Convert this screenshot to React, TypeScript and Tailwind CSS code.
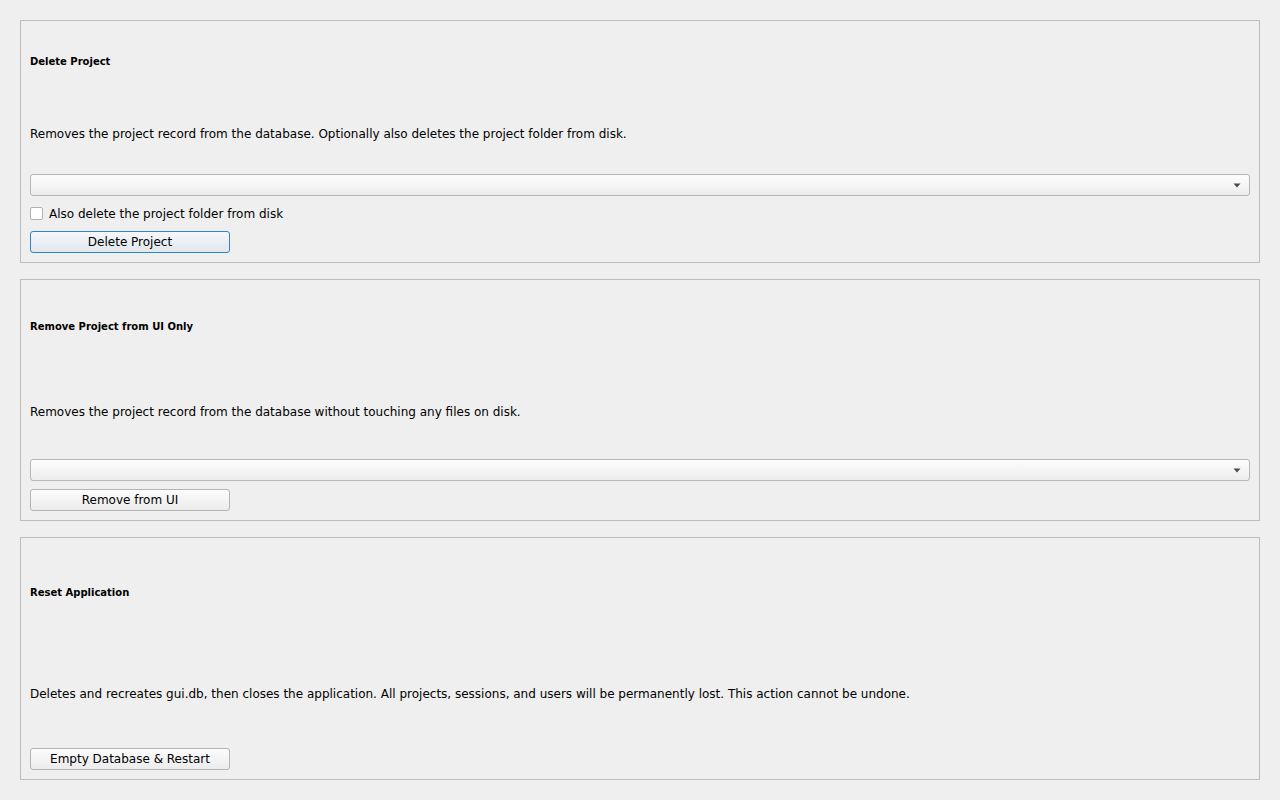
import React from "react";

const font = { fontFamily: '"DejaVu Sans", Verdana, sans-serif' };

function Combo({ className = "" }: { className?: string }) {
  return (
    <div
      className={`h-[22px] w-full rounded-[3px] border border-[#b6b6b6] bg-gradient-to-b from-[#fdfdfd] to-[#ededed] flex items-center justify-end pr-[8px] ${className}`}
    >
      <svg width="8" height="5" viewBox="0 0 8 5" className="block">
        <path d="M0.5 0.5 L7.5 0.5 L4 4.5 Z" fill="#4a4a4a" />
      </svg>
    </div>
  );
}

function Button({ label, focused = false, className = "" }: { label: string; focused?: boolean; className?: string }) {
  return (
    <div
      className={`h-[22px] w-[200px] rounded-[3px] border flex items-center justify-center text-[12px] leading-[14px] text-black ${
        focused
          ? "border-[#3284c3] bg-gradient-to-b from-[#f4f7fa] to-[#e1e7ee]"
          : "border-[#b4b4b4] bg-gradient-to-b from-[#fcfcfc] to-[#ececec]"
      } ${className}`}
    >
      {label}
    </div>
  );
}

export default function App() {
  return (
    <div className="w-[1280px] h-[800px] bg-[#efefef] px-[20px] py-[20px] flex flex-col gap-[16px] text-black" style={font}>
      {/* Delete Project */}
      <div className="h-[243px] border border-[#bcbcbc] pt-[35px] pb-[9px] px-[9px] flex flex-col">
        <div className="text-[10px] leading-[12px] font-bold">Delete Project</div>
        <div className="mt-[59px] text-[12px] leading-[14px]">
          Removes the project record from the database. Optionally also deletes the project folder from disk.
        </div>
        <Combo className="mt-[33px]" />
        <div className="mt-[11px] h-[13px] flex items-center gap-[6px]">
          <div className="w-[13px] h-[13px] rounded-[2px] border border-[#b0b0b0] bg-white" />
          <span className="text-[12px] leading-[14px]">Also delete the project folder from disk</span>
        </div>
        <Button label="Delete Project" focused className="mt-[11px]" />
      </div>

      {/* Remove Project from UI Only */}
      <div className="h-[242px] border border-[#bcbcbc] pt-[41px] pb-[9px] px-[9px] flex flex-col">
        <div className="text-[10px] leading-[12px] font-bold">Remove Project from UI Only</div>
        <div className="mt-[72px] text-[12px] leading-[14px]">
          Removes the project record from the database without touching any files on disk.
        </div>
        <Combo className="mt-[40px]" />
        <Button label="Remove from UI" className="mt-[8px]" />
      </div>

      {/* Reset Application */}
      <div className="h-[243px] border border-[#bcbcbc] pt-[49px] pb-[9px] px-[9px] flex flex-col">
        <div className="text-[10px] leading-[12px] font-bold">Reset Application</div>
        <div className="mt-[88px] text-[12px] leading-[14px]">
          Deletes and recreates gui.db, then closes the application. All projects, sessions, and users will be permanently lost. This action cannot be undone.
        </div>
        <Button label="Empty Database &amp; Restart" className="mt-[47px]" />
      </div>
    </div>
  );
}
